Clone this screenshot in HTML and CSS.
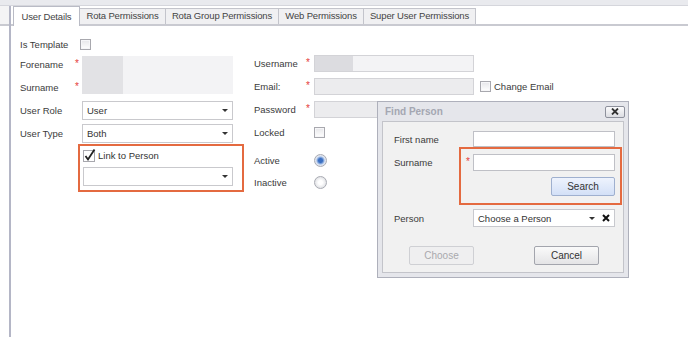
FILE: index.html
```html
<!DOCTYPE html>
<html lang="en">
<head>
    <meta charset="UTF-8">
    <meta name="viewport" content="width=device-width, initial-scale=1.0">
    <title>User Details</title>
    <link rel="stylesheet" href="styles.css">
</head>
<body>
    <div class="topbar"></div>
    <div class="frame">
        <div class="gutter"><div class="gutter-head"></div></div>
        <div class="main">
            <div class="tabs">
                <div class="tab active">User Details</div>
                <div class="tab">Rota Permissions</div>
                <div class="tab">Rota Group Permissions</div>
                <div class="tab">Web Permissions</div>
                <div class="tab">Super User Permissions</div>
            </div>
            <div class="page">
                <div class="col-left">
                    <div class="grid-left">
                        <label>Is Template</label><span></span><span class="check nudge"></span>
                        <label>Forename</label><span class="req">*</span><div class="redacted"></div>
                        <label>Surname</label><span class="req">*</span>
                        <label>User Role</label><span></span><div class="select">User<i class="caret"></i></div>
                        <label>User Type</label><span></span><div class="select">Both<i class="caret"></i></div>
                    </div>
                    <div class="link-box">
                        <div class="link-row">
                            <svg class="tick" width="13" height="13" viewBox="0 0 13 13">
                                <rect x="0.5" y="1.5" width="11" height="11" fill="#fff" stroke="#a8a8ae"/>
                                <path d="M2.5 7 L5 10.5 L11.5 0.5" fill="none" stroke="#222" stroke-width="1.8"/>
                            </svg>
                            <span>Link to Person</span>
                        </div>
                        <div class="select wide"><i class="caret"></i></div>
                    </div>
                </div>

                <div class="col-mid">
                    <div class="grid-mid">
                        <label>Username</label><span class="req">*</span><div class="field light"></div>
                        <label>Email:</label><span class="req">*</span><div class="field"></div>
                        <div class="extra"><span class="check"></span><span>Change Email</span></div>
                        <label>Password</label><span class="req">*</span><div class="field"></div>
                        <label>Locked</label><span></span><span class="check"></span>
                    </div>
                    <div class="grid-state">
                        <label>Active</label><span></span><span class="radio on"></span>
                        <label>Inactive</label><span></span><span class="radio"></span>
                    </div>
                </div>
            </div>
        </div>
    </div>

    <div class="dialog">
        <div class="dialog-title">
            <span>Find Person</span>
            <div class="close">
                <svg width="8" height="7" viewBox="0 0 8 7"><path d="M1 0.5 L7 6.5 M7 0.5 L1 6.5" stroke="#333" stroke-width="1.8"/></svg>
            </div>
        </div>
        <div class="dialog-body">
            <div class="dlg-grid">
                <label>First name</label>
                <div class="field white"></div>
                <label class="top">Surname</label>
                <div class="search-box">
                    <div class="search-row"><span class="req">*</span><div class="field white"></div></div>
                    <button class="btn search">Search</button>
                </div>
                <label class="person-label">Person</label>
                <div class="select person">Choose a Person<i class="caret"></i>
                    <svg class="clear" width="8" height="8" viewBox="0 0 8 8"><path d="M1 1 L7 7 M7 1 L1 7" stroke="#111" stroke-width="2"/></svg>
                </div>
            </div>
            <div class="dlg-buttons">
                <button class="btn disabled">Choose</button>
                <button class="btn">Cancel</button>
            </div>
        </div>
    </div>
</body>
</html>
```

FILE: styles.css
```css
* {
    box-sizing: border-box;
}

body {
    margin: 0;
    width: 688px;
    height: 337px;
    overflow: hidden;
    position: relative;
    background: #fff;
    color: #3b3b3b;
    font-family: "Liberation Sans", Arial, sans-serif;
    font-size: 9.5px;
}

.topbar {
    height: 6px;
    background: #e9eaee;
    border-bottom: 1px solid #d5d6dc;
}

.frame {
    display: flex;
    height: 331px;
}

.gutter {
    width: 9px;
}

.gutter-head {
    height: 20px;
    background: #f4f4f5;
    border-bottom: 2px solid #c9cad1;
}

.main {
    flex: 1;
    border-left: 2px solid #b4b6c6;
}

/* tabs */
.tabs {
    display: flex;
    align-items: flex-end;
    height: 20px;
    padding-left: 2px;
    border-bottom: 2px solid #c9cad1;
}

.tab {
    height: 16px;
    line-height: 14px;
    margin-right: -1px;
    border: 1px solid #c3c4cb;
    border-bottom: none;
    background: #f0f0f2;
    color: #444;
    text-align: center;
    letter-spacing: -0.15px;
    white-space: nowrap;
}

.tab:nth-child(1) { width: 67px; }
.tab:nth-child(2) { width: 87px; }
.tab:nth-child(3) { width: 114px; }
.tab:nth-child(4) { width: 86px; }
.tab:nth-child(5) { width: 113px; }

.tab.active {
    height: 20px;
    line-height: 19px;
    margin-bottom: -2px;
    background: #fff;
    border-color: #b9bbc5;
    position: relative;
    z-index: 1;
}

/* form */
.page {
    display: flex;
    align-items: flex-start;
    padding: 9px 0 0 9px;
}

.col-left {
    width: 224px;
}

.grid-left {
    display: grid;
    grid-template-columns: 55px 7px 151px;
    grid-template-rows: 18px repeat(4, 23px);
    align-items: center;
}

.grid-left label,
.grid-mid label,
.grid-state label {
    grid-column: 1;
    white-space: nowrap;
}

.req {
    color: #e5403a;
    font-size: 10px;
    align-self: start;
    margin-top: 5px;
}

.redacted {
    grid-row: span 2;
    align-self: stretch;
    margin: 3px 0 5px;
    background: linear-gradient(to right, #e2e2e5 0 41px, #f3f3f5 41px);
}

.select {
    display: flex;
    align-items: center;
    height: 19px;
    padding-left: 4px;
    border: 1px solid #c9c9cd;
    background: #fff;
    color: #333;
}

.caret {
    margin-left: auto;
    margin-right: 4px;
    width: 0;
    height: 0;
    border-left: 3px solid transparent;
    border-right: 3px solid transparent;
    border-top: 3px solid #333;
}

.check {
    display: block;
    width: 11px;
    height: 11px;
    border: 1px solid #a8a8ae;
    background: linear-gradient(#e6e6e9, #fff);
    box-shadow: inset 0 0 0 1px #f6f6f8;
}

.nudge {
    margin-left: -2px;
}

.link-box {
    width: 166px;
    height: 48px;
    margin: -1px 0 0 58px;
    padding: 3px 0 0 3px;
    border: 2px solid #e46a40;
}

.link-row {
    display: flex;
    align-items: center;
    gap: 2px;
    height: 13px;
    color: #333;
}

.select.wide {
    width: 150px;
    margin-top: 5px;
}

.col-mid {
    margin: 17px 0 0 10px;
}

.grid-mid,
.grid-state {
    display: grid;
    grid-template-columns: 52px 8px 160px auto;
    grid-auto-rows: 23px;
    align-items: center;
}

.grid-state {
    grid-auto-rows: 22px;
    margin-top: 5px;
}

.field {
    height: 17px;
    border: 1px solid #d3d3d7;
    background: #ececee;
}

.field.light {
    background: linear-gradient(to right, #dcdce0 0 38px, #f3f3f5 38px);
}

.field.white {
    height: 16px;
    border-color: #bfc0c6;
    background: #fff;
}

.extra {
    display: flex;
    align-items: center;
    gap: 3px;
    padding-left: 6px;
    white-space: nowrap;
}

.radio {
    display: block;
    width: 13px;
    height: 13px;
    border-radius: 50%;
    border: 1px solid #a9abb3;
    background: radial-gradient(circle, #fff 0 2px, #dfe0e4 6px);
}

.radio.on {
    background: radial-gradient(circle, #3b6fc2 0 2px, #86a8dc 3.2px, #dbe4f3 4.5px, #e4e5ea 6px);
}

/* find person dialog */
.dialog {
    position: absolute;
    left: 377px;
    top: 101px;
    width: 252px;
    height: 177px;
    padding: 0 4px 4px;
    background: #e5e6eb;
    border: 1px solid #aeb0bb;
}

.dialog-title {
    display: flex;
    align-items: center;
    justify-content: space-between;
    height: 19px;
    padding-left: 3px;
}

.dialog-title span {
    font-size: 10px;
    font-weight: bold;
    color: #a4a7b2;
}

.close {
    display: flex;
    align-items: center;
    justify-content: center;
    width: 20px;
    height: 12px;
    margin-right: -1px;
    border: 1px solid #8e919c;
    border-radius: 2px;
    background: linear-gradient(#fbfbfc, #dcdde2);
}

.dialog-body {
    height: 152px;
    padding: 9px 0 0 11px;
    background: #f1f1f1;
    border: 1px solid #c3c4ca;
}

.dlg-grid {
    display: grid;
    grid-template-columns: 79px 142px;
    align-items: center;
}

.dlg-grid label.top {
    align-self: start;
    margin-top: 10px;
}

.search-box {
    display: flex;
    flex-direction: column;
    margin: 0 -7px 0 -14px;
    padding: 5px 5px 7px 2px;
    border: 2px solid #e46a40;
}

.search-row {
    display: flex;
    align-items: center;
}

.search-row .req {
    width: 10px;
    margin-top: 2px;
    text-align: center;
}

.search-row .field {
    flex: 1;
    height: 17px;
}

.btn {
    height: 19px;
    width: 65px;
    padding: 0;
    font: inherit;
    font-size: 10px;
    color: #333;
    border: 1px solid #a3a5ad;
    border-radius: 2px;
    background: linear-gradient(#fafafa, #e4e4e6);
}

.btn.search {
    width: 64px;
    margin: 6px 0 0 auto;
    border-color: #9fb0cf;
    background: linear-gradient(#eef3fd, #d3e0f7);
}

.btn.disabled {
    color: #a9a9ad;
    border-color: #cfd0d4;
    background: #efeff0;
}

.person-label,
.select.person {
    margin-top: 4px;
}

.select.person {
    height: 18px;
    border-color: #c8c9ce;
}

.select.person .caret {
    margin-right: 7px;
}

.clear {
    margin-right: 4px;
}

.dlg-buttons {
    display: flex;
    justify-content: space-between;
    margin-top: 19px;
    padding: 0 24px 0 15px;
}
```
